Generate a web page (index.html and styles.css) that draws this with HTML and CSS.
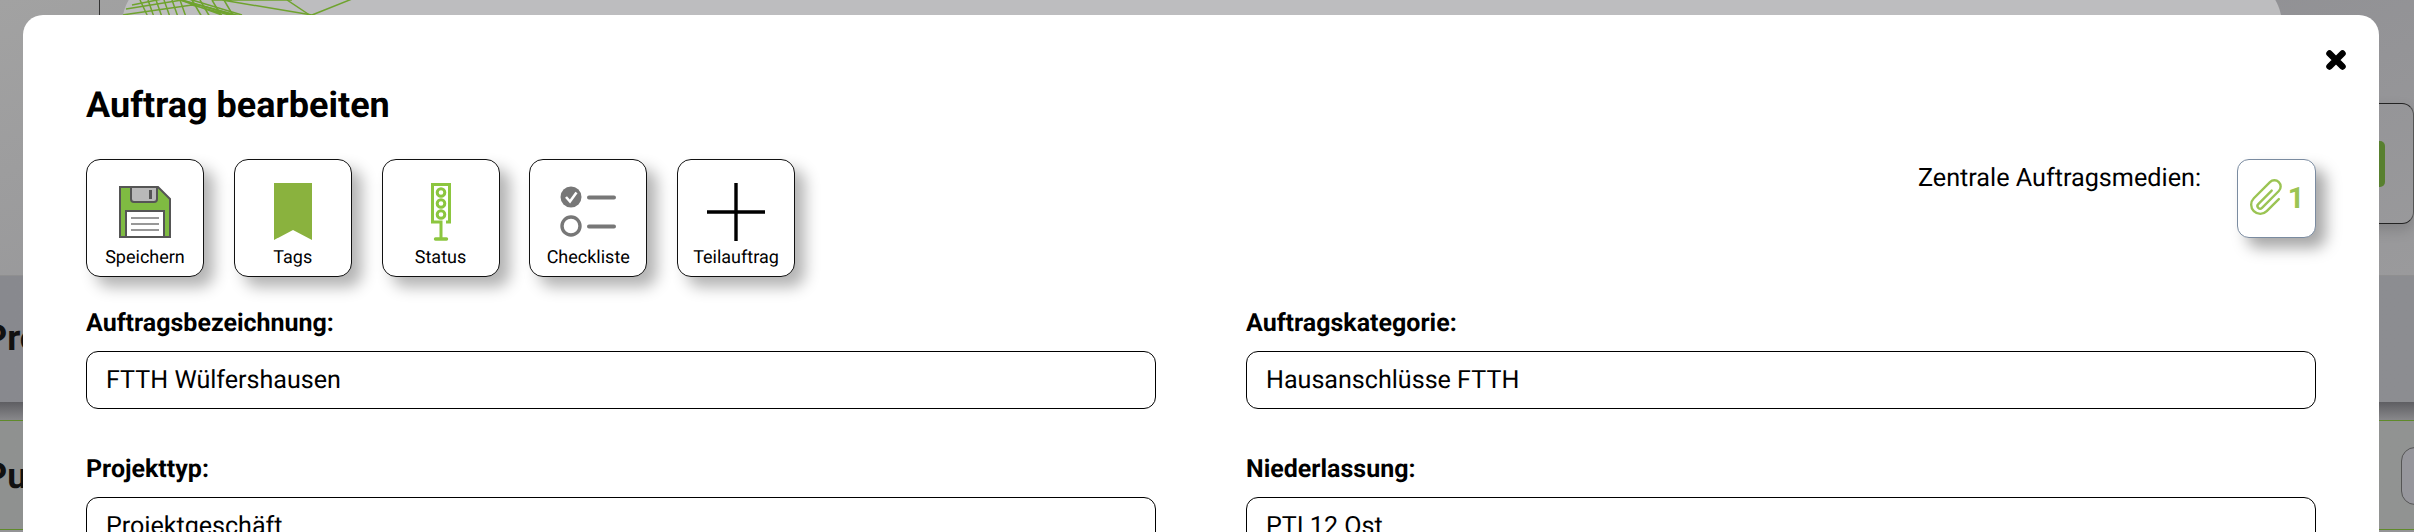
FILE: index.html
```html
<!DOCTYPE html>
<html lang="de">
<head>
    <meta charset="UTF-8">
    <title>Auftrag bearbeiten</title>
    <link rel="stylesheet" href="styles.css">
</head>
<body>
    <div class="page">
        <div class="band band-top">
            <div class="top-row">
                <span class="top-line"></span>
                <div class="hero">
                    <svg class="hero-mesh" width="240" height="60" viewBox="0 0 240 60">
                        <g fill="none" stroke="#6fa32e" stroke-width="1.5">
                            <path d="M0 40 L70 30 L130 46 M4 34 L60 25 L120 42 M10 30 L50 22 L100 40"/>
                            <path d="M18 25 L26 42 M26 25 L32 42 M34 25 L40 42 M42 25 L48 42 M50 25 L56 42 M58 25 L64 42"/>
                            <path d="M70 25 L80 42 M78 25 L88 42 M90 25 L100 42 M102 25 L112 42"/>
                            <path d="M40 20 L150 50 M60 22 L120 40 M90 25 L170 25 M100 25 L190 40"/>
                            <path d="M190 40 L240 20 M165 25 L210 55"/>
                        </g>
                    </svg>
                </div>
            </div>
            <div class="side-card"><span class="side-pill"></span></div>
        </div>
        <div class="band band-mid">
            <h2 class="bg-title">Pro</h2>
        </div>
        <div class="band band-dark"></div>
        <div class="band band-low">
            <h2 class="bg-title">Pu</h2>
            <span class="bg-button"></span>
        </div>
    </div>

    <div class="modal">
        <button class="close" type="button" aria-label="Schließen">
            <svg width="22" height="22" viewBox="0 0 22 22"><path d="M4.5 4.5 L17.5 17.5 M17.5 4.5 L4.5 17.5" stroke="#000" stroke-width="6.5" stroke-linecap="round"/></svg>
        </button>
        <h1>Auftrag bearbeiten</h1>
        <div class="toolbar">
            <div class="actions">
                <button class="action" type="button">
                    <svg class="icon" width="52" height="58" viewBox="0 0 52 58">
                        <g transform="translate(0 3)">
                            <path d="M1 1 H39 L51 13 V51 H1 Z" fill="#7fbb42" stroke="#555" stroke-width="2"/>
                            <path d="M12 1 H38 V13 a3 3 0 0 1 -3 3 H15 a3 3 0 0 1 -3 -3 Z" fill="#b9b9b9" stroke="#555" stroke-width="2"/>
                            <rect x="30" y="4" width="3" height="9" fill="#555"/>
                            <rect x="7" y="25" width="38" height="26" fill="#fff" stroke="#555" stroke-width="2"/>
                            <path d="M12 32 H40 M12 38 H40 M12 44 H40" stroke="#777" stroke-width="1.5"/>
                        </g>
                    </svg>
                    <span>Speichern</span>
                </button>
                <button class="action" type="button">
                    <svg class="icon" width="38" height="58" viewBox="0 0 38 58">
                        <path d="M0 0 H38 V57 L19 47 L0 57 Z" fill="#8ab23e"/>
                    </svg>
                    <span>Tags</span>
                </button>
                <button class="action" type="button">
                    <svg class="icon" width="20" height="58" viewBox="0 0 20 58">
                        <g fill="none" stroke="#8cc63f" stroke-width="3">
                            <path d="M15 39 H18.5 V1.5 H1.5 V39 H10 V55"/>
                            <circle cx="10" cy="9.5" r="3.8"/>
                            <circle cx="10" cy="20.5" r="3.8"/>
                            <circle cx="10" cy="31.5" r="3.8"/>
                            <path d="M4.5 56 H15.5" stroke-width="3.4" stroke-linecap="round"/>
                        </g>
                    </svg>
                    <span>Status</span>
                </button>
                <button class="action" type="button">
                    <svg class="icon" width="56" height="58" viewBox="0 0 56 58">
                        <circle cx="11" cy="14" r="10.5" fill="#777"/>
                        <path d="M6 14 L10 18.5 L16.5 9.5" fill="none" stroke="#fff" stroke-width="2.6"/>
                        <circle cx="11" cy="43" r="9" fill="none" stroke="#777" stroke-width="3.4"/>
                        <path d="M29 14.5 H54 M29 43.5 H54" stroke="#777" stroke-width="4" stroke-linecap="round"/>
                    </svg>
                    <span>Checkliste</span>
                </button>
                <button class="action" type="button">
                    <svg class="icon" width="58" height="58" viewBox="0 0 58 58">
                        <path d="M29 0 V58 M0 29 H58" stroke="#000" stroke-width="3.4"/>
                    </svg>
                    <span>Teilauftrag</span>
                </button>
            </div>
            <div class="media">
                <span class="media-label">Zentrale Auftragsmedien:</span>
                <button class="media-button" type="button">
                    <svg width="36" height="32" viewBox="0 0 36 32">
                        <path transform="translate(18 16) rotate(45) scale(0.95) translate(-17 -17)" d="M15 8 V28 a2.8 2.8 0 0 0 5.6 0 V3 a6.6 6.6 0 0 0 -13.2 0 V27 a9.6 9.6 0 0 0 19.2 0 V9" fill="none" stroke="#9bc453" stroke-width="2.5" stroke-linecap="round"/>
                    </svg>
                    <span>1</span>
                </button>
            </div>
        </div>
        <form class="fields">
            <div class="field">
                <label for="name">Auftragsbezeichnung:</label>
                <input id="name" type="text" value="FTTH Wülfershausen">
            </div>
            <div class="field">
                <label for="category">Auftragskategorie:</label>
                <input id="category" type="text" value="Hausanschlüsse FTTH">
            </div>
            <div class="field">
                <label for="type">Projekttyp:</label>
                <input id="type" type="text" value="Projektgeschäft">
            </div>
            <div class="field">
                <label for="branch">Niederlassung:</label>
                <input id="branch" type="text" value="PTI 12 Ost">
            </div>
        </form>
    </div>
</body>
</html>
```

FILE: styles.css
```css
html, body {
    margin: 0;
    height: 100%;
    overflow: hidden;
}
body {
    font-family: Roboto, "Liberation Sans", sans-serif;
    color: #000;
    background-color: #949496;
    text-rendering: geometricPrecision;
}

/* page behind the dialog, dimmed */
.page {
    height: 100vh;
    overflow: hidden;
}
.band {
    overflow: hidden;
}
.band-top {
    height: 275px;
    background: linear-gradient(160deg, #a2a2a2 0%, #8e8e92 60%, #9a9a9c 100%);
}
.top-row {
    display: flex;
    height: 28px;
}
.top-line {
    width: 1px;
    height: 28px;
    margin-left: 99px;
    background-color: #333;
}
.hero {
    flex: 1;
    height: 100px;
    margin: -25px 132px 0 22px;
    border-radius: 60px;
    background-color: #bdbdbf;
    overflow: hidden;
}
.hero-mesh {
    display: block;
}
.side-card {
    box-sizing: border-box;
    display: flex;
    align-items: center;
    width: 100px;
    height: 121px;
    margin: 75px 0 0 auto;
    border: 1px solid #222;
    border-right-color: #555;
    border-radius: 12px;
    box-shadow: 0 6px 14px rgba(0,0,0,0.15);
}
.side-pill {
    width: 70px;
    height: 46px;
    border-radius: 5px;
    background-color: #58802f;
}
.band-mid {
    height: 127px;
    background: linear-gradient(90deg, #88898e, #8c8d91);
    border-top: 1px solid #8f8f90;
    box-sizing: border-box;
}
.band-dark {
    height: 18px;
    background: linear-gradient(180deg, #5e5e62, #88888b);
}
.band-low {
    display: flex;
    height: 110px;
    box-sizing: border-box;
    border-top: 1px solid #5f8a2a;
    border-bottom: 1px solid #5f8a2a;
    background: linear-gradient(90deg, #8f9190, #919392);
}
.bg-title {
    margin: 34px 0 0 -16px;
    font-size: 36px;
    line-height: 42px;
    font-weight: 700;
    color: #111;
}
.band-mid .bg-title {
    margin-top: 41px;
}
.bg-button {
    width: 80px;
    height: 56px;
    margin: 26px -69px 0 auto;
    border: 1px solid #555;
    border-radius: 14px;
    background-color: #96969c;
}

/* dialog */
.modal {
    position: fixed;
    top: 15px;
    left: 23px;
    box-sizing: border-box;
    width: 2356px;
    height: 800px;
    padding: 0 63px;
    background-color: #fff;
    border-radius: 20px;
}
.close {
    position: absolute;
    top: 34px;
    right: 32px;
    padding: 0;
    border: none;
    background: none;
    line-height: 0;
}
h1 {
    margin: 0;
    padding-top: 69px;
    font-size: 36px;
    line-height: 42px;
    font-weight: 700;
}
.toolbar {
    display: flex;
    justify-content: space-between;
    margin-top: 33px;
}
.actions {
    display: flex;
    gap: 29.75px;
}
.action {
    display: flex;
    flex-direction: column;
    align-items: center;
    box-sizing: border-box;
    width: 118px;
    height: 118px;
    padding: 23px 0 0;
    border: 1px solid #111;
    border-radius: 14px;
    background-color: #fff;
    box-shadow: 10px 10px 15px rgba(0,0,0,0.3);
    font-family: inherit;
    font-size: 18px;
    line-height: 20px;
    color: #000;
    text-rendering: geometricPrecision;
}
.icon {
    display: block;
    margin-bottom: 7px;
    overflow: visible;
}
.media {
    display: flex;
    gap: 36px;
}
.media-label {
    font-size: 25.2px;
    line-height: 30px;
    margin-top: 5px;
}
.media-button {
    display: flex;
    align-items: center;
    justify-content: center;
    gap: 3px;
    box-sizing: border-box;
    width: 79px;
    height: 79px;
    padding: 0 0 2px;
    border: 1px solid #7a8ba0;
    border-radius: 12px;
    background-color: #fff;
    box-shadow: 10px 10px 15px rgba(0,0,0,0.35);
    font-family: inherit;
    font-size: 29px;
    font-weight: 700;
    color: #9bc453;
}
.media-button svg {
    overflow: visible;
}
.fields {
    display: grid;
    grid-template-columns: 1070px 1070px;
    column-gap: 90px;
    row-gap: 46px;
    margin-top: 32px;
}
.field label {
    display: block;
    margin-bottom: 12px;
    font-size: 25px;
    line-height: 30px;
    font-weight: 700;
}
.field input {
    display: block;
    box-sizing: border-box;
    width: 100%;
    height: 58px;
    padding: 0 19px;
    border: 1px solid #000;
    border-radius: 12px;
    font-family: inherit;
    font-size: 25.1px;
    color: #000;
    background-color: #fff;
    text-rendering: geometricPrecision;
}
```
